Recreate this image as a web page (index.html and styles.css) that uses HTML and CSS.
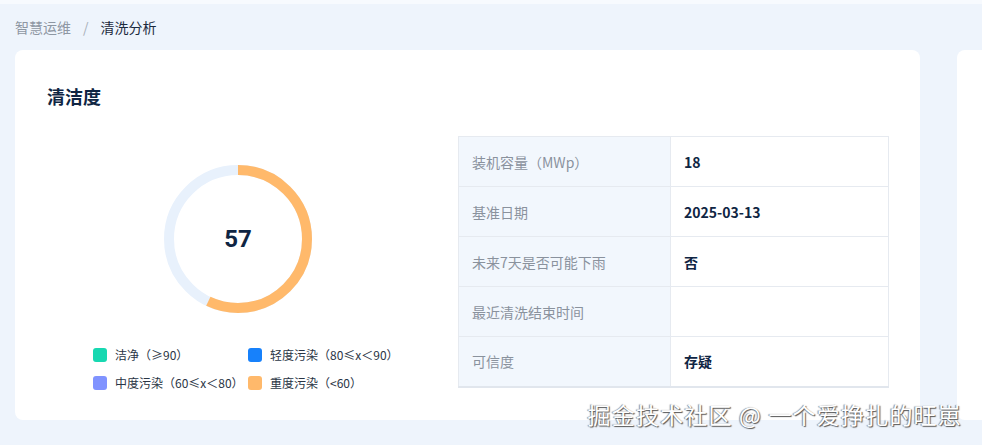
FILE: index.html
```html
<!DOCTYPE html>
<html lang="zh-CN">
<head>
    <meta charset="UTF-8">
    <meta name="viewport" content="width=device-width, initial-scale=1.0">
    <title>清洗分析</title>
    <link rel="stylesheet" href="styles.css">
</head>
<body>

    <div class="breadcrumb">
        <span class="crumb">智慧运维</span>
        <span class="sep">/</span>
        <span class="crumb current">清洗分析</span>
    </div>

    <div class="cards">
        <div class="card">
            <h2 class="card-title">清洁度</h2>

            <div class="card-body">
                <div class="gauge-col">
                    <div class="gauge">
                        <svg width="150" height="150" viewBox="0 0 150 150">
                            <circle class="track" cx="75" cy="75" r="69"></circle>
                            <circle class="bar" cx="75" cy="75" r="69"
                                    stroke-dasharray="247.1 433.5"
                                    transform="rotate(-90 75 75)"></circle>
                        </svg>
                        <div class="gauge-value">57</div>
                    </div>

                    <div class="legend">
                        <div class="legend-item"><i class="dot clean"></i>洁净（≥90）</div>
                        <div class="legend-item"><i class="dot light"></i>轻度污染（80≤x＜90）</div>
                        <div class="legend-item"><i class="dot middle"></i>中度污染（60≤x＜80）</div>
                        <div class="legend-item"><i class="dot heavy"></i>重度污染（&lt;60）</div>
                    </div>
                </div>

                <table class="info">
                    <tr><th>装机容量（MWp）</th><td>18</td></tr>
                    <tr><th>基准日期</th><td>2025-03-13</td></tr>
                    <tr><th>未来7天是否可能下雨</th><td>否</td></tr>
                    <tr><th>最近清洗结束时间</th><td></td></tr>
                    <tr><th>可信度</th><td>存疑</td></tr>
                </table>
            </div>
        </div>

        <div class="card card-next"></div>
    </div>

    <div class="watermark">掘金技术社区 @ 一个爱挣扎的旺崽</div>

</body>
</html>
```

FILE: styles.css
```css
body {
    margin: 0;
    font-family: "Noto Sans CJK SC", "Noto Sans", sans-serif;
    background-color: #eef4fc;
    border-top: 4px solid #f7fafe;
    height: 441px;
    overflow: hidden;
    position: relative;
}

.breadcrumb {
    height: 46px;
    display: flex;
    align-items: center;
    padding-left: 15px;
    font-size: 14px;
    color: #8e97a3;
}

.sep {
    margin: 0 12px 0 12px;
    color: #a8b0ba;
}

.crumb.current {
    color: #1b2a3e;
}

.cards {
    display: flex;
    gap: 37px;
    padding-left: 15px;
}

.card {
    width: 905px;
    height: 370px;
    box-sizing: border-box;
    flex-shrink: 0;
    background-color: #fff;
    border-radius: 8px;
    padding: 34px 31px 34px 32px;
}

.card-next {
    width: 300px;
}

.card-title {
    margin: 0;
    font-size: 18px;
    line-height: 24px;
    font-weight: bold;
    color: #0f2543;
}

.card-body {
    display: flex;
    gap: 29px;
    margin-top: 28px;
}

.gauge-col {
    width: 382px;
    padding-top: 28px;
}

.gauge {
    width: 150px;
    height: 150px;
    margin: 0 auto;
    position: relative;
}

.gauge svg {
    display: block;
}

.track {
    fill: none;
    stroke: #e8f1fc;
    stroke-width: 10;
}

.bar {
    fill: none;
    stroke: #ffb96b;
    stroke-width: 10;
}

.gauge-value {
    position: absolute;
    top: 0;
    left: 0;
    right: 0;
    bottom: 0;
    display: flex;
    align-items: center;
    justify-content: center;
    font-family: Roboto, "Noto Sans", sans-serif;
    font-size: 24px;
    font-weight: bold;
    color: #0f2543;
}

.legend {
    display: grid;
    grid-template-columns: 155px 160px;
    row-gap: 8px;
    margin-top: 31px;
    padding-left: 46px;
}

.legend-item {
    display: flex;
    align-items: center;
    font-size: 12px;
    line-height: 20px;
    color: #2a3545;
}

.dot {
    width: 14px;
    height: 14px;
    border-radius: 3px;
    margin-right: 8px;
}

.dot.clean { background-color: #17d8b1; }
.dot.light { background-color: #1781fb; }
.dot.middle { background-color: #8093ff; }
.dot.heavy { background-color: #ffb96b; }

.info {
    width: 431px;
    height: 250px;
    border-collapse: collapse;
    font-size: 14px;
    line-height: 20px;
    border-bottom: 2px solid #e1e6ed;
}

.info tr {
    height: 50px;
}

.info th,
.info td {
    padding: 0 13px;
    border: 1px solid #e6eaf0;
    text-align: left;
}

.info th {
    width: 185px;
    background-color: #f2f7fd;
    font-weight: normal;
    color: #8a929d;
}

.info td {
    font-weight: bold;
    color: #0f2543;
}

.watermark {
    position: absolute;
    right: 20px;
    bottom: 16px;
    font-size: 23px;
    line-height: 30px;
    color: #fff;
    text-shadow: 1px 1px 1px #555, -1px 0 1px #888;
    letter-spacing: 1.2px;
}
```
